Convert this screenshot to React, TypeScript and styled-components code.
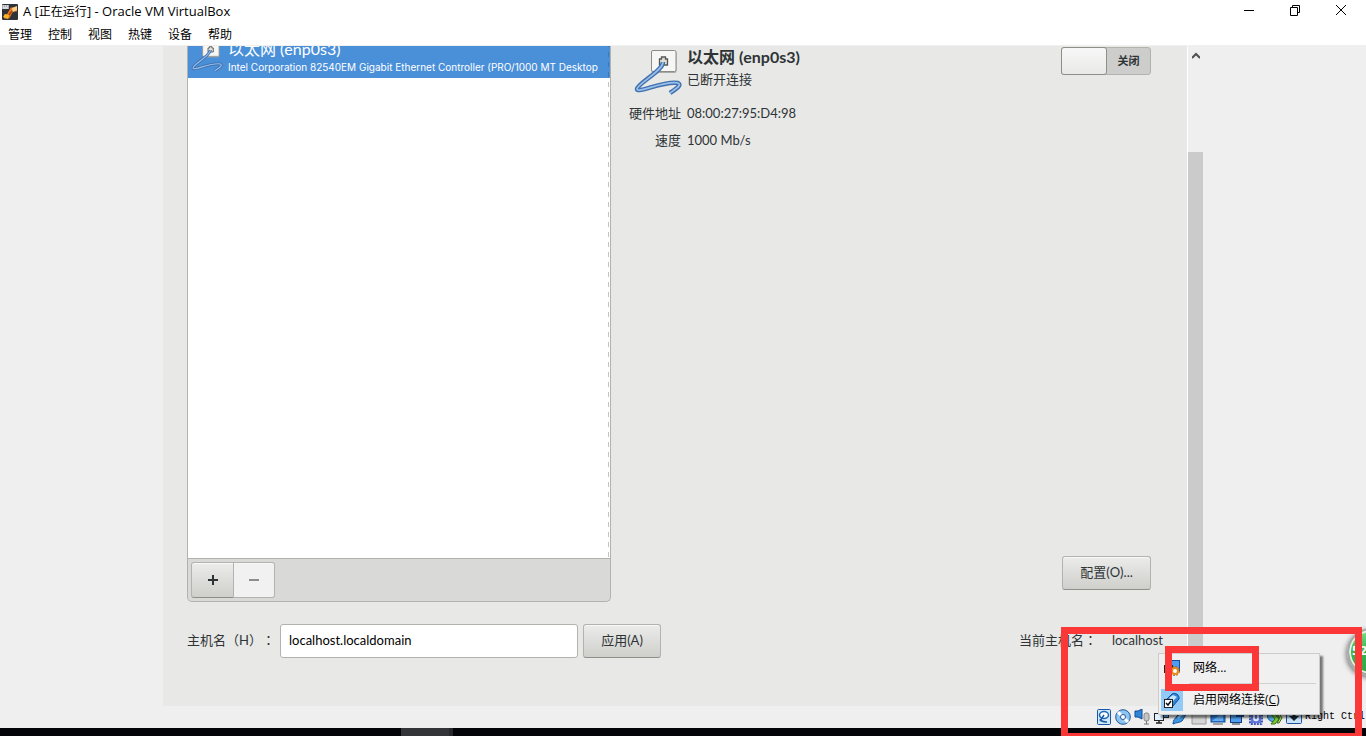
import React from "react";
import styled, { createGlobalStyle } from "styled-components";

const gtkFont = `Lato, "Noto Sans CJK SC", sans-serif`;
const winFont = `"Open Sans", "Noto Sans CJK SC", sans-serif`;

const GlobalStyle = createGlobalStyle`
  * { box-sizing: border-box; }
  html, body { margin: 0; }
  body {
    background: #efefef;
    font-family: ${gtkFont};
    font-size: 13px;
    line-height: 20px;
    color: #2e3436;
    text-spacing-trim: space-all;
  }
  button, input { font: inherit; color: inherit; }
`;

const Window = styled.div`
  position: relative;
  display: flex;
  flex-direction: column;
  min-height: 100vh;
  overflow: hidden;
`;

const TitleBar = styled.header`
  display: flex;
  align-items: center;
  height: 24px;
  padding-left: 2px;
  gap: 5px;
  background: #fff;
  color: #000;
  font-family: ${winFont};
`;

const Title = styled.h1`
  flex: 1;
  margin: 0;
  padding-bottom: 2px;
  font-size: 13px;
  font-weight: 400;
  white-space: nowrap;
  span { font-size: 12px; }
`;

const CaptionButton = styled.button`
  display: flex;
  align-items: center;
  justify-content: center;
  width: 46px;
  height: 20px;
  padding: 0;
  border: 0;
  background: none;
`;

const CaptionGroup = styled.div`
  display: flex;
  align-self: flex-start;
  padding-right: 2px;
`;

const MenuBar = styled.nav`
  display: flex;
  height: 22px;
  padding-left: 8px;
  gap: 16px;
  background: #fff;
  border-bottom: 1px solid #f0f0f0;
  font-family: ${winFont};
  font-size: 12px;
`;

const MenuButton = styled.button`
  padding: 0;
  border: 0;
  background: none;
  color: #000;
  line-height: 20px;
`;

const Viewport = styled.main`
  display: flex;
  justify-content: center;
  flex: 1;
`;

const Guest = styled.div`
  display: flex;
  flex: 0 1 1040px;
  min-width: 0;
`;

const Panel = styled.section`
  flex: 1;
  min-width: 0;
  display: flex;
  flex-direction: column;
  padding: 0 24px 48px;
  background: #e8e8e6;
  border-right: 1px solid #fff;
`;

const Scrollbar = styled.div`
  width: 15px;
  display: flex;
  flex-direction: column;
  background: #efefef;
`;

const ScrollUp = styled.button`
  display: flex;
  justify-content: center;
  height: 106px;
  padding: 6px 0 0;
  border: 0;
  background: none;
`;

const ScrollThumb = styled.div`
  flex: 1;
  background: #cbcbcb;
`;

const Columns = styled.div`
  flex: 1;
  display: flex;
  gap: 18px;
`;

const DeviceBox = styled.div`
  flex: 0 0 424px;
  display: flex;
  flex-direction: column;
  border: 1px solid #b3b3ae;
  border-top: 0;
  border-radius: 0 0 5px 5px;
  background: #d9d9d7;
  overflow: hidden;
`;

const DeviceList = styled.div`
  position: relative;
  flex: 1;
  background: #fff;
  border-bottom: 1px solid #b3b3ae;
  &::after {
    content: "";
    position: absolute;
    top: 0;
    right: 1px;
    bottom: 0;
    width: 1px;
    background: repeating-linear-gradient(rgba(60, 60, 60, 0.3) 0 1px, transparent 1px 6px, rgba(60, 60, 60, 0.3) 6px 10px);
  }
`;

const DeviceRow = styled.div`
  display: flex;
  align-items: flex-end;
  height: 32px;
  padding-left: 3px;
  gap: 5px;
  overflow: hidden;
  background: #4a90d9;
  color: #fff;
  white-space: nowrap;
`;

const DeviceIcon = styled.div`
  display: flex;
  padding-bottom: 6px;
`;

const DeviceName = styled.div`
  font-size: 16px;
  line-height: 20px;
`;

const DeviceDetail = styled.div`
  font-family: Inter, sans-serif;
  font-size: 10px;
  line-height: 16px;
  padding-bottom: 3px;
`;

const Toolbar = styled.div`
  display: flex;
  padding: 3px;
`;

const GtkButton = styled.button<{ $width: number; $height?: number }>`
  width: ${(p) => p.$width}px;
  height: ${(p) => p.$height ?? 34}px;
  padding: 0 0 2px;
  border: 1px solid #b3b3ae;
  border-bottom-color: #8f8f8a;
  border-radius: 3px;
  background: linear-gradient(#ececeb, #e0e0de 40%, #cfcfcc);
  box-shadow: inset 0 1px #f8f8f8;
  white-space: nowrap;
`;

const AddButton = styled(GtkButton)`
  padding: 0;
  border-radius: 3px 0 0 3px;
`;

const RemoveButton = styled(GtkButton)`
  padding: 0;
  border-left: 0;
  border-bottom-color: #b3b3ae;
  border-radius: 0 3px 3px 0;
  background: #f1f1f1;
`;

const Details = styled.div`
  flex: 1;
  min-width: 0;
  display: flex;
  flex-direction: column;
  padding: 1px 12px 12px 0;
`;

const DetailsHead = styled.div`
  display: flex;
  align-items: flex-start;
  padding-left: 5px;
  gap: 5px;
`;

const Heading = styled.div`
  flex: 1;
`;

const DetailTitle = styled.h2`
  margin: 0 0 2px;
  font-size: 16px;
  line-height: 20px;
  font-weight: 700;
`;

const Facts = styled.dl`
  display: grid;
  grid-template-columns: 52px 1fr;
  gap: 7px 6px;
  margin: 8px 0 0;
  dt { text-align: right; }
  dd { margin: 0; }
`;

const Push = styled.div`
  flex: 1;
`;

const ActionRow = styled.div`
  display: flex;
  justify-content: flex-end;
`;

const Switch = styled.label`
  display: flex;
  width: 90px;
  height: 28px;
  border: 1px solid #b3b3ae;
  border-radius: 3px;
  background: #cdcdcc;
  font-size: 11px;
  line-height: 26px;
  font-weight: 700;
  input {
    appearance: none;
    width: 46px;
    height: 28px;
    margin: -1px 0 0 -1px;
    border: 1px solid #8f8f8a;
    border-radius: 3px;
    background: linear-gradient(#f7f7f7, #e9e9e7);
  }
  span { flex: 1; text-align: center; }
`;

const HostRow = styled.form`
  display: flex;
  align-items: center;
  height: 34px;
  margin-top: 22px;
  white-space: nowrap;
`;

const HostLabel = styled.label`
  width: 93px;
  padding-bottom: 2px;
`;

const Colon = styled.span`
  font-family: "Noto Sans CJK TC", sans-serif;
  line-height: 1;
`;

const HostInput = styled.input`
  width: 298px;
  height: 34px;
  margin-right: 5px;
  padding: 0 8px 2px;
  border: 1px solid #b3b3ae;
  border-radius: 3px;
  background: #fff;
  color: #000;
`;

const CurrentHost = styled.div`
  display: flex;
  gap: 15px;
  margin-left: auto;
  padding-bottom: 2px;
`;

const StatusBar = styled.footer`
  display: flex;
  align-items: center;
  justify-content: flex-end;
  height: 22px;
  padding-right: 1px;
  gap: 3px;
  background: #efefef;
  color: #000;
  font-family: "Liberation Mono", monospace;
  font-size: 10px;
  white-space: nowrap;
`;

const Taskbar = styled.div`
  height: 8px;
  background: #020408;
  padding-left: 401px;
  &::before {
    content: "";
    display: block;
    width: 48px;
    height: 8px;
    background: #333438;
    border-right: 4px solid #26282b;
  }
`;

const Popup = styled.div`
  position: absolute;
  right: 46px;
  bottom: 21px;
  width: 162px;
  padding: 2px;
  border: 1px solid #cccccc;
  background: #f0f0f0;
  box-shadow: 3px 3px 2px rgba(0, 0, 0, 0.5);
`;

const PopupItem = styled.button`
  display: flex;
  align-items: center;
  gap: 10px;
  width: 100%;
  height: 24px;
  padding: 0;
  border: 0;
  background: none;
  color: #000;
  font-family: ${winFont};
  font-size: 12px;
  white-space: nowrap;
`;

const PopupIcon = styled.span<{ $on?: boolean }>`
  display: flex;
  align-items: center;
  justify-content: center;
  width: 22px;
  height: 22px;
  background: ${(p) => (p.$on ? "#91c9f7" : "none")};
`;

const Separator = styled.hr`
  height: 1px;
  margin: 3px 1px 4px 28px;
  border: 0;
  background: #d0d0d0;
`;

const Frame = styled.div<{ $right: number; $bottom: number; $width: number; $height: number }>`
  position: absolute;
  right: ${(p) => p.$right}px;
  bottom: ${(p) => p.$bottom}px;
  width: ${(p) => p.$width}px;
  height: ${(p) => p.$height}px;
  border: 7px solid #fc3737;
  pointer-events: none;
`;

const Bubble = styled.div`
  position: absolute;
  right: -29px;
  bottom: 60px;
  width: 48px;
  height: 48px;
  padding-left: 3px;
  border: 2px solid #a8a8a8;
  border-radius: 50%;
  background: linear-gradient(#7be08a, #35b44e 50%, #2fa848);
  box-shadow: inset 0 0 0 2px #e6eee6, -1px 2px 5px rgba(0, 0, 0, 0.5);
  color: #fff;
  font-family: ${winFont};
  font-weight: 700;
  font-size: 13px;
  line-height: 40px;
`;

function VirtualBoxLogo() {
  return (
    <svg width="16" height="16" viewBox="0 0 16 16" aria-hidden="true">
      <rect width="16" height="16" rx="1" fill="#2f3238" />
      <path d="M0 1h7v4H0z" fill="#a9adb3" />
      <path d="M1 2h1M3 2h1M5 2h1M1 4h5" stroke="#fff" />
      <path d="M2 12.500h4l4-7h5" fill="none" stroke="#e87a20" strokeWidth="4" />
      <path d="M1 13l2-3 4 1-1 4z" fill="#f7b52e" />
      <path d="M10 4l5-2v4l-4 2z" fill="#fbcf8a" />
      <path d="M7 11l3-4" stroke="#a93f0c" strokeWidth="1.500" />
    </svg>
  );
}

function WiredIcon({ size }: { size: number }) {
  const cable = "M29 15C29 24 4 36 3 42c0 5 28-9 41-6 4 2-1 5-8 10";
  return (
    <svg width={size} height={size} viewBox="0 0 48 48" aria-hidden="true">
      <rect x="17.500" y="4" width="25" height="22" rx="2" fill="#a9a9a6" />
      <rect x="17.500" y="3.500" width="24.500" height="21" rx="1.500" fill="#f6f6f4" stroke="#8b8c89" />
      <path d="M25.500 18v-6h2v-2h4v2h2v6z" fill="#deded9" stroke="#555753" strokeWidth="1.300" />
      <path d={cable} fill="none" stroke="#3f70b0" strokeWidth="4.500" strokeLinejoin="round" />
      <path d={cable} fill="none" stroke="#9abfe8" strokeWidth="1.700" />
    </svg>
  );
}

function Ico({ children, label }: { children: React.ReactNode; label: string }) {
  return (
    <svg width="16" height="16" viewBox="0 0 16 16" role="img" aria-label={label}>
      {children}
    </svg>
  );
}

function StatusIcons() {
  return (
    <>
      <Ico label="硬盘">
        <rect x="1.500" y=".5" width="13" height="15" rx="1" fill="#cfe9fb" stroke="#1757a6" />
        <ellipse cx="8" cy="6" rx="4.500" ry="3.500" fill="#fff" stroke="#1d68b8" strokeWidth="1.500" />
        <path d="M8 6L4 12M4 10c1 3 4 3 7 3" fill="none" stroke="#1757a6" strokeWidth="1.500" />
      </Ico>
      <Ico label="光驱">
        <circle cx="8" cy="8" r="7.300" fill="#8cc4f2" stroke="#1f5597" />
        <path d="M8 8L3 3M8 8l5 5" stroke="#fff" strokeWidth="3" />
        <circle cx="8" cy="8" r="2.500" fill="#fff" stroke="#1f5597" />
      </Ico>
      <Ico label="声音">
        <path d="M1 2h3l4-2v10L4 8H1z" fill="#2f86d6" stroke="#134b94" />
        <rect x="10" y="4" width="5" height="8" rx="2" fill="#c5c5c5" stroke="#888" />
        <path d="M12.500 12v3M10 15h5" stroke="#777" />
      </Ico>
      <Ico label="网络">
        <rect x="6.500" y="1.500" width="9" height="7" fill="#58a7f0" stroke="#333" />
        <rect x="1.500" y="4.500" width="9" height="7" fill="#dff0ff" stroke="#222" />
        <path d="M3 14h6M6 12v2" stroke="#222" strokeWidth="1.500" />
      </Ico>
      <Ico label="USB">
        <path d="M1 15c0-4 2-5 4-8l7-6 3 3-5 8c-3 2-5 1-9 3z" fill="#3f9ae6" stroke="#14509a" />
        <path d="M6 9l6-6" stroke="#bfe4ff" strokeWidth="2" />
      </Ico>
      <Ico label="共享文件夹">
        <path d="M1 3h6l1 2h7v10H1z" fill="#d5d5d5" stroke="#999" />
      </Ico>
      <Ico label="显示">
        <rect x="1" y="1" width="14" height="12" fill="#2c7edb" stroke="#174f9c" />
        <path d="M2 12L13 3v9z" fill="#69aff2" />
        <path d="M3 15h10" stroke="#555" />
      </Ico>
      <Ico label="录像">
        <rect x="1.500" y="4.500" width="11" height="9" fill="#4f9ff0" stroke="#163f82" />
        <rect x="7" y="2" width="8" height="6" fill="#174c9d" />
        <path d="M3 15h8" stroke="#234" />
      </Ico>
      <Ico label="处理器">
        <rect x="2" y="1" width="12" height="14" rx="1" fill="none" stroke="#3e57b8" strokeWidth="2" strokeDasharray="2 1" />
        <rect x="3" y="2" width="10" height="12" fill="#5a76dc" />
        <path d="M6 4v5c0 3 4 3 4 0V4" fill="none" stroke="#e8eeff" strokeWidth="2" />
      </Ico>
      <Ico label="鼠标集成">
        <circle cx="6" cy="7" r="5.500" fill="#58b3e9" stroke="#1c5a98" />
        <path d="M4 15l4-5-4-5h4l4 5-4 5z" fill="#7ecb35" stroke="#356d1a" />
        <path d="M9 4h3l3 5-3 5h-2l3-5z" fill="#c2ea6a" stroke="#356d1a" />
      </Ico>
      <Ico label="热键">
        <rect x=".5" y=".5" width="15" height="14" rx="1" fill="#c9e3fa" stroke="#22539a" />
        <path d="M6.500 3h3v4H13l-5 5-5-5h3.500z" fill="#182436" />
      </Ico>
    </>
  );
}

export default function App() {
  return (
    <Window>
      <GlobalStyle />
      <TitleBar>
        <VirtualBoxLogo />
        <Title>A [<span>正在运行</span>] - Oracle VM VirtualBox</Title>
        <CaptionGroup>
          <CaptionButton aria-label="最小化">
            <svg width="12" height="12" viewBox="0 0 12 12"><path d="M1 6.500h10" stroke="#000" /></svg>
          </CaptionButton>
          <CaptionButton aria-label="还原">
            <svg width="12" height="12" viewBox="0 0 12 12" fill="none" stroke="#000">
              <path d="M1.500 3.500h7v8h-7zM3.500 3V1.500h7v7H9" />
            </svg>
          </CaptionButton>
          <CaptionButton aria-label="关闭窗口">
            <svg width="12" height="12" viewBox="0 0 12 12"><path d="M1 1l10 10M11 1L1 11" stroke="#000" /></svg>
          </CaptionButton>
        </CaptionGroup>
      </TitleBar>
      <MenuBar>
        {["管理", "控制", "视图", "热键", "设备", "帮助"].map((m) => (
          <MenuButton key={m}>{m}</MenuButton>
        ))}
      </MenuBar>
      <Viewport>
        <Guest>
          <Panel>
            <Columns>
              <DeviceBox>
                <DeviceList>
                  <DeviceRow>
                    <DeviceIcon>
                      <WiredIcon size={32} />
                    </DeviceIcon>
                    <div>
                      <DeviceName>以太网 (enp0s3)</DeviceName>
                      <DeviceDetail>Intel Corporation 82540EM Gigabit Ethernet Controller (PRO/1000 MT Desktop</DeviceDetail>
                    </div>
                  </DeviceRow>
                </DeviceList>
                <Toolbar>
                  <AddButton $width={43} $height={36} aria-label="添加">
                    <svg width="10" height="10" viewBox="0 0 10 10"><path d="M0 5h10M5 0v10" stroke="#2e3436" strokeWidth="2" /></svg>
                  </AddButton>
                  <RemoveButton $width={41} $height={36} aria-label="移除" disabled>
                    <svg width="10" height="10" viewBox="0 0 10 10"><path d="M0 5h10" stroke="#8b8e8f" strokeWidth="2" /></svg>
                  </RemoveButton>
                </Toolbar>
              </DeviceBox>
              <Details>
                <DetailsHead>
                  <WiredIcon size={48} />
                  <Heading>
                    <DetailTitle>以太网 (enp0s3)</DetailTitle>
                    <div>已断开连接</div>
                  </Heading>
                  <Switch>
                    <input type="checkbox" role="switch" />
                    <span>关闭</span>
                  </Switch>
                </DetailsHead>
                <Facts>
                  <dt>硬件地址</dt>
                  <dd>08:00:27:95:D4:98</dd>
                  <dt>速度</dt>
                  <dd>1000 Mb/s</dd>
                </Facts>
                <Push />
                <ActionRow>
                  <GtkButton $width={89}>配置(O)...</GtkButton>
                </ActionRow>
              </Details>
            </Columns>
            <HostRow onSubmit={(e) => e.preventDefault()}>
              <HostLabel htmlFor="hostname">主机名（H）<Colon>：</Colon></HostLabel>
              <HostInput id="hostname" defaultValue="localhost.localdomain" />
              <GtkButton $width={78}>应用(A)</GtkButton>
              <CurrentHost>
                <span>当前主机名<Colon>：</Colon></span>
                <span>localhost</span>
              </CurrentHost>
            </HostRow>
          </Panel>
          <Scrollbar>
            <ScrollUp aria-label="向上滚动">
              <svg width="8" height="8" viewBox="0 0 8 8"><path d="M0 6l4-4 4 4" fill="none" stroke="#505050" strokeWidth="2" /></svg>
            </ScrollUp>
            <ScrollThumb />
          </Scrollbar>
        </Guest>
      </Viewport>
      <StatusBar>
        <StatusIcons />
        <span>Right Ctrl</span>
      </StatusBar>
      <Taskbar />
      <Popup>
        <PopupItem>
          <PopupIcon>
            <svg width="16" height="16" viewBox="0 0 16 16" aria-hidden="true">
              <rect x="5.500" y=".5" width="10" height="10" fill="#4e9df0" stroke="#174d96" />
              <rect x=".5" y="5.500" width="8" height="7" fill="#e5f2ff" stroke="#222" />
              <circle cx="11" cy="11" r="3" fill="#fff" stroke="#e98a1c" strokeWidth="2" />
              <circle cx="11" cy="11" r="4.500" fill="none" stroke="#b85a08" strokeDasharray="2 1.500" />
            </svg>
          </PopupIcon>
          网络...
        </PopupItem>
        <Separator />
        <PopupItem>
          <PopupIcon $on>
            <svg width="16" height="16" viewBox="0 0 16 16" aria-hidden="true">
              <path d="M2 8l6-6c3-2 8 1 7 5l-6 7z" fill="#2f86dc" stroke="#134c96" />
              <path d="M5 6l4-3 4 2-4 4z" fill="#c9e6fd" />
              <rect x=".5" y="7.500" width="8" height="8" fill="#fff" stroke="#222" />
              <path d="M2 11l2 2 3-4" fill="none" stroke="#111" strokeWidth="1.500" />
            </svg>
          </PopupIcon>
          <span>启用网络连接(<u>C</u>)</span>
        </PopupItem>
      </Popup>
      <Bubble>52</Bubble>
      <Frame $right={4} $bottom={-4} $width={301} $height={113} />
      <Frame $right={107} $bottom={45} $width={94} $height={45} />
    </Window>
  );
}
